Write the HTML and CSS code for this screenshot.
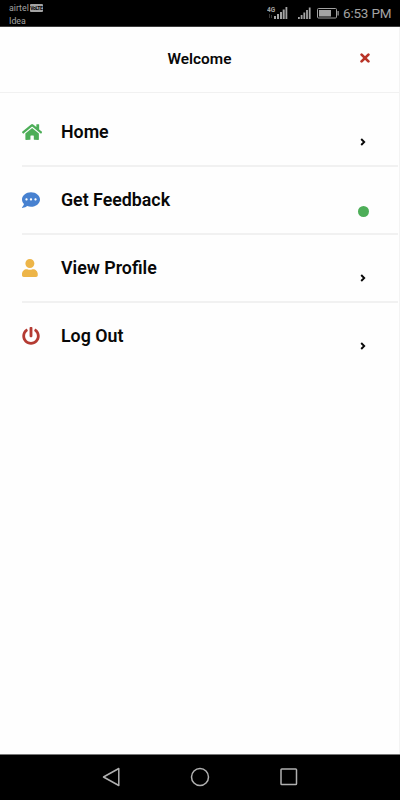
FILE: index.html
```html
<!DOCTYPE html>
<html lang="en">
<head>
<meta charset="utf-8">
<title>Welcome</title>
<link rel="stylesheet" href="styles.css">
</head>
<body>
<div class="status">
  <div class="carrier">
    <div class="carrier-line">airtel <span class="volte">VoLTE</span></div>
    <div class="carrier-line">Idea</div>
  </div>
  <svg class="signals" width="72" height="16" viewBox="0 0 72 16" fill="#a3a3a3">
    <text x="0" y="6" class="network">4G</text>
    <path d="M2 8h1v4h-1zM4 9h1v3h-1z" opacity=".35"/>
    <path d="M7 10h2v3h-2zM10 8h2v5h-2zM13 6h2v7h-2zM15.700 3.500h2v9.500h-2zM18.500 1h1.800v12h-1.800z"/>
    <path d="M31 11h1.800v2h-1.800zM33.700 9h1.800v4h-1.800zM36.400 6.500h1.800v6.500h-1.800zM39.100 4h1.800v9h-1.800zM41.800 1.500h1.800v11.500h-1.800z"/>
    <rect x="50.500" y="2.500" width="19" height="9.500" rx="1" fill="none" stroke="#a3a3a3"/>
    <path d="M52 4h12v6.500h-12zM70.500 5h1.200v4.500h-1.200z"/>
  </svg>
  <span class="clock">6:53 PM</span>
</div>

<main class="screen">
  <header class="header">
    <h1 class="title">Welcome</h1>
    <svg class="close" viewBox="0 0 10 10"><path d="M1.600 1.600l6.800 6.800M8.400 1.600l-6.800 6.800"/></svg>
  </header>
  <nav class="menu">
    <a class="item">
      <svg class="icon home" viewBox="0 0 576 512"><path d="M280.370 148.260L96 300.110V464a16 16 0 0 0 16 16l112.060-.290a16 16 0 0 0 15.920-16V368a16 16 0 0 1 16-16h64a16 16 0 0 1 16 16v95.640a16 16 0 0 0 16 16.050L464 480a16 16 0 0 0 16-16V300L295.670 148.260a12.190 12.190 0 0 0-15.300 0zM571.600 251.470L488 182.560V44.050a12 12 0 0 0-12-12h-56a12 12 0 0 0-12 12v72.610L318.470 43a48 48 0 0 0-61 0L4.340 251.470a12 12 0 0 0-1.600 16.900l25.500 31A12 12 0 0 0 45.150 301l235.220-193.740a12.190 12.190 0 0 1 15.300 0L530.900 301a12 12 0 0 0 16.900-1.600l25.500-31a12 12 0 0 0-1.700-16.930z"/></svg>
      <span class="label">Home</span>
      <svg class="chevron" viewBox="0 0 6 8"><path d="M1.200 1l3 3-3 3"/></svg>
    </a>
    <a class="item">
      <svg class="icon feedback" viewBox="0 0 512 512"><path d="M256 32C114.600 32 0 125.100 0 240c0 49.600 21.400 95 57 130.700C44.500 421.100 2.700 466 2.200 466.500c-2.200 2.300-2.800 5.700-1.500 8.700S4.800 480 8 480c66.300 0 116-31.800 140.600-51.400 32.700 12.300 69 19.400 107.400 19.400 141.400 0 256-93.100 256-208S397.400 32 256 32zM128 272c-17.700 0-32-14.300-32-32s14.300-32 32-32 32 14.300 32 32-14.300 32-32 32zm128 0c-17.700 0-32-14.300-32-32s14.300-32 32-32 32 14.300 32 32-14.300 32-32 32zm128 0c-17.700 0-32-14.300-32-32s14.300-32 32-32 32 14.300 32 32-14.300 32-32 32z"/></svg>
      <span class="label">Get Feedback</span>
      <span class="dot"></span>
    </a>
    <a class="item">
      <svg class="icon profile" viewBox="0 0 448 512"><path d="M224 256c70.700 0 128-57.300 128-128S294.700 0 224 0 96 57.300 96 128s57.300 128 128 128zm89.600 32h-16.700c-22.200 10.200-46.900 16-72.900 16s-50.600-5.800-72.900-16h-16.700C60.200 288 0 348.200 0 422.400V464c0 26.500 21.500 48 48 48h352c26.500 0 48-21.500 48-48v-41.600c0-74.200-60.200-134.400-134.400-134.400z"/></svg>
      <span class="label">View Profile</span>
      <svg class="chevron" viewBox="0 0 6 8"><path d="M1.200 1l3 3-3 3"/></svg>
    </a>
    <a class="item">
      <svg class="icon logout" viewBox="0 0 512 512"><path d="M400 54.100c63 45 104 118.600 104 201.900 0 136.800-110.800 247.700-247.500 248C120 504.300 8.200 393 8 256.400 7.900 173.100 48.900 99.300 111.800 54.200c11.700-8.300 28-4.800 35 7.700L162.600 90c5.900 10.500 3.100 23.800-6.600 31-41.500 30.800-68 79.600-68 134.900-.1 92.300 74.500 168.100 168 168.100 91.600 0 168.600-74.200 168-169.100-.3-51.800-24.700-101.800-68.100-134-9.700-7.200-12.400-20.500-6.500-30.900l15.800-28.100c7-12.400 23.200-16.100 34.800-7.800zM296 264V24c0-13.300-10.700-24-24-24h-32c-13.300 0-24 10.700-24 24v240c0 13.300 10.700 24 24 24h32c13.300 0 24-10.700 24-24z"/></svg>
      <span class="label">Log Out</span>
      <svg class="chevron" viewBox="0 0 6 8"><path d="M1.200 1l3 3-3 3"/></svg>
    </a>
  </nav>
</main>

<footer class="navbar">
  <svg viewBox="0 0 20 20"><path d="M17.800 1.500v17L2.500 10z"/></svg>
  <svg viewBox="0 0 20 20"><circle cx="10" cy="10" r="8.500"/></svg>
  <svg viewBox="0 0 20 20"><rect x="2" y="2" width="15.500" height="15.500" rx=".8"/></svg>
</footer>
</body>
</html>
```

FILE: styles.css
```css
* { box-sizing: border-box; }

body {
  margin: 0;
  height: 800px;
  display: flex;
  flex-direction: column;
  overflow: hidden;
  background: #fefefe;
  color: #080808;
  font-family: Roboto, "Liberation Sans", sans-serif;
}

.status {
  height: 27px;
  flex: none;
  display: flex;
  background: #000;
  color: #a3a3a3;
  border-bottom: 1px solid #3c3c3c;
}

.carrier {
  flex: 1;
  padding: 2px 0 0 9px;
  font-size: 8.8px;
  line-height: 12.5px;
}

.carrier-line {
  display: flex;
  align-items: center;
  gap: 1px;
}

.volte {
  width: 13px;
  height: 8px;
  border-radius: 1px;
  background: #a3a3a3;
  color: #000;
  font-size: 5px;
  font-weight: 700;
  line-height: 8px;
  letter-spacing: -0.4px;
  text-align: center;
}

.signals { margin: 6px 4px 0 0; }

.network { font-size: 6.5px; font-weight: 700; }

.clock {
  width: 57px;
  font-size: 13.5px;
  line-height: 27px;
  letter-spacing: -0.2px;
  white-space: nowrap;
}

.screen {
  flex: 1;
  border-right: 1px solid #f3f3f3;
}

.header {
  height: 66px;
  display: grid;
  grid-template-columns: 1fr auto 1fr;
  align-items: center;
  border-bottom: 1px solid #f1f1f1;
}

.title {
  grid-column: 2;
  margin: 0 0 2px;
  font-size: 15.4px;
  font-weight: 600;
  line-height: 20px;
}

.close {
  width: 10px;
  height: 10px;
  margin: 0 29px 3px 0;
  justify-self: end;
  fill: none;
  stroke: #b93428;
  stroke-width: 2.7;
  stroke-linecap: round;
}

.menu { padding: 6px 1px 0 22px; }

.item {
  height: 67.9px;
  display: grid;
  grid-template-columns: 39px 1fr 38px;
  align-items: center;
  border-bottom: 2px solid #f1f1f1;
}

.item:last-child { border-bottom-color: transparent; }

.icon { height: 18px; display: block; }

.home { fill: #4dae58; }
.feedback { fill: #4781d0; }
.profile { fill: #edb548; }
.logout { fill: #b43a32; }

.label {
  font-size: 17.8px;
  font-weight: 600;
  line-height: 24px;
}

.chevron {
  width: 6px;
  height: 8px;
  margin-top: 20px;
  fill: none;
  stroke: #080808;
  stroke-width: 1.9;
}

.dot {
  width: 11px;
  height: 11px;
  margin: 23px 0 0 -2px;
  border-radius: 50%;
  background: #4dae58;
}

.navbar {
  height: 46px;
  flex: none;
  display: flex;
  justify-content: center;
  gap: 69px;
  padding-top: 12px;
  background: #000;
  border-top: 1px solid #777;
}

.navbar svg {
  width: 20px;
  height: 20px;
  fill: none;
  stroke: #b0b0b0;
  stroke-width: 1.5;
  stroke-linejoin: round;
}
```
